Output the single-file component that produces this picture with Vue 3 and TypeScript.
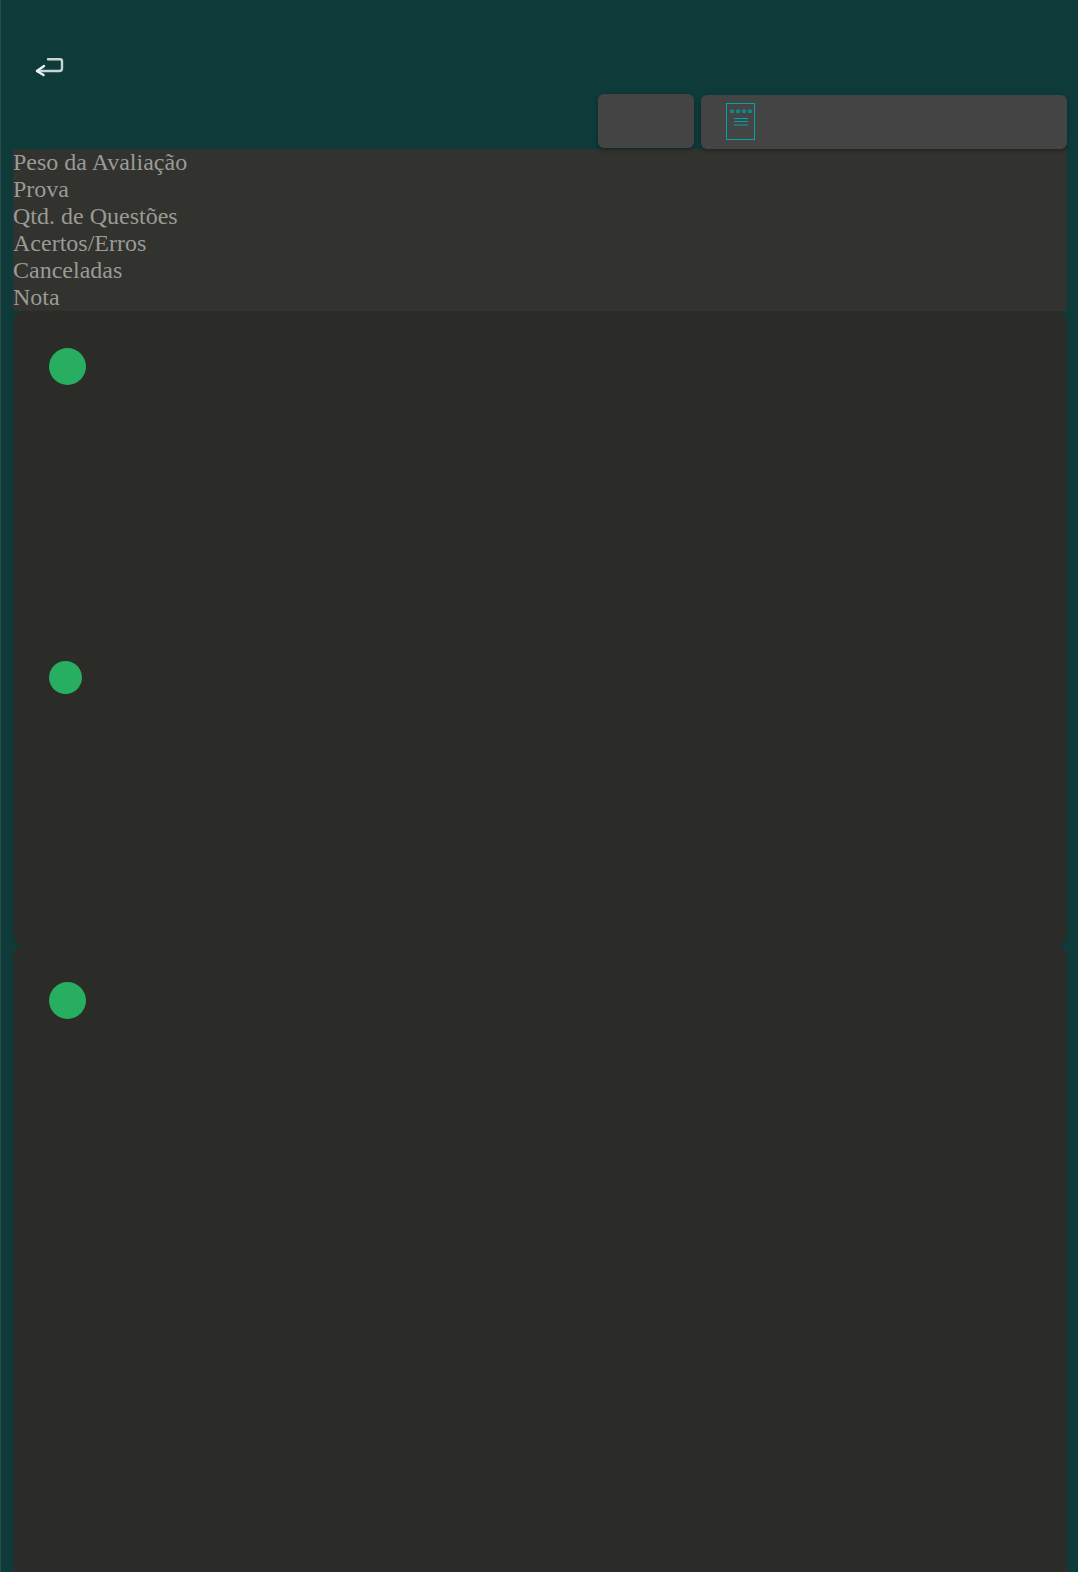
<script setup lang="ts">
const labels: string[] = ['Peso da Avaliação', 'Prova', 'Qtd. de Questões', 'Acertos/Erros', 'Canceladas', 'Nota']
</script>

<template>
  <div class="page">
    <header class="top">
      <button class="back" aria-label="Voltar">
        <svg width="32" height="20" viewBox="0 0 32 20" fill="none">
          <path d="M15 2.2H27Q29 2.2 29 4V11.5Q29 14 26.5 14H4" stroke="#c6d6d5" stroke-width="2.4" stroke-linecap="round" stroke-linejoin="round" />
          <path d="M11 9L4 14L10.5 18" stroke="#eef4f4" stroke-width="2.4" stroke-linecap="round" stroke-linejoin="round" />
        </svg>
      </button>
      <div class="actions">
        <div class="btn small"></div>
        <div class="btn wide">
          <svg width="30" height="38" viewBox="0 0 30 38" fill="none" stroke="#00a5a8">
            <rect x="0.5" y="0.5" width="28" height="36" stroke-width="1" />
            <g stroke="#0a8f92" stroke-width="1.4">
              <rect x="4.5" y="7.2" width="3" height="2" rx="0.8" />
              <rect x="10.5" y="7.2" width="3" height="2" rx="0.8" />
              <rect x="16.5" y="7.2" width="3" height="2" rx="0.8" />
              <rect x="22.5" y="7.2" width="3" height="2" rx="0.8" />
            </g>
            <path d="M8 15.5H22M8 18.5H22M8 22H22" stroke-width="1" />
          </svg>
        </div>
      </div>
    </header>

    <section class="summary">
      <div v-for="label in labels" :key="label">{{ label }}</div>
    </section>

    <section class="card first">
      <span class="dot"></span>
      <span class="dot mini"></span>
    </section>
    <section class="card second">
      <span class="dot"></span>
    </section>
  </div>
</template>

<style>
html, body { margin: 0; background: #0f3a3a; }
</style>

<style scoped>
.page {
  width: 1078px;
  height: 1572px;
  box-sizing: border-box;
  overflow: hidden;
  padding: 0 11px 0 12px;
  background: #0f3a3a;
  border-left: 1px solid #2b4b4b;
  font-family: "Liberation Serif", serif;
}
.top {
  height: 149px;
  position: relative;
  display: flex;
  flex-direction: column;
  justify-content: flex-end;
}
.back {
  position: absolute;
  left: 20px;
  top: 57px;
  padding: 0;
  border: 0;
  background: none;
  line-height: 0;
}
.actions {
  display: flex;
  align-items: flex-end;
  justify-content: flex-end;
  gap: 7px;
}
.btn {
  background: #444444;
  border-radius: 6px;
  box-shadow: 0 2px 4px rgba(0, 0, 0, 0.3);
  height: 54px;
  box-sizing: border-box;
}
.small {
  width: 96px;
  margin-bottom: 1px;
}
.wide {
  width: 366px;
  display: flex;
  align-items: center;
  padding-left: 25px;
}
.summary {
  background: #32322e;
  color: #9a9a97;
  font-size: 24px;
  line-height: 27px;
  height: 162px;
}
.card {
  background: #2b2b27;
  border-radius: 10px / 13px;
  box-sizing: border-box;
  padding-left: 36px;
}
.first {
  height: 634px;
  padding-top: 37px;
}
.second {
  height: 640px;
  padding-top: 37px;
}
.dot {
  display: block;
  width: 37px;
  height: 37px;
  border-radius: 50%;
  background: #27ae60;
}
.mini {
  width: 33px;
  height: 33px;
  margin-top: 276px;
}
</style>
